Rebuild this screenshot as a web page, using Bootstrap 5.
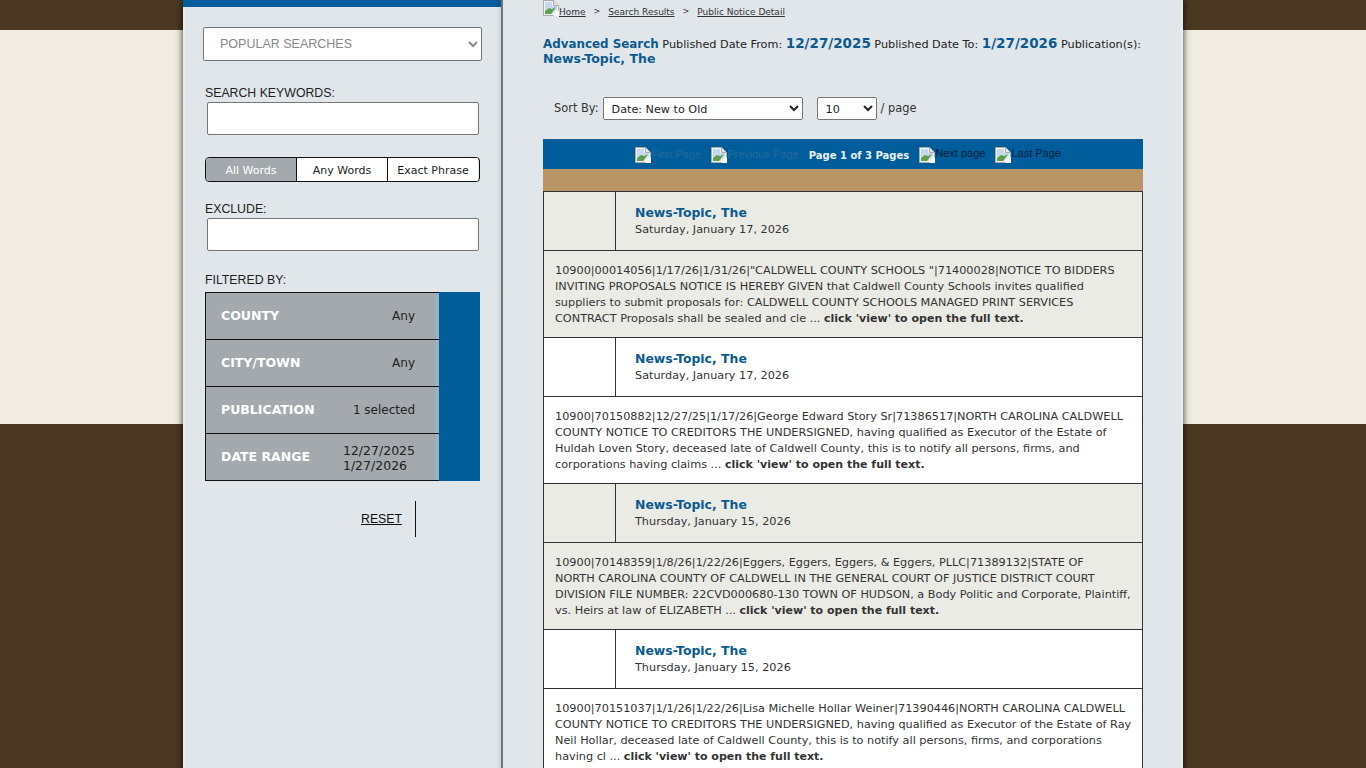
<!DOCTYPE html>
<html lang="en">
<head>
  <meta charset="UTF-8" />
  <meta name="viewport" content="width=device-width, initial-scale=1.0">
  <title>Public Notice Search</title>
  <link href="https://cdn.jsdelivr.net/npm/bootstrap@5.3.0/dist/css/bootstrap.min.css" rel="stylesheet">
  <style>
    :root {
      --brown: #4a3822;
      --cream: #f0ece1;
      --panel: #e1e6ea;
      --blue: #005d9c;
      --tan: #b99465;
      --filter-gray: #a3a9ac;
    }

    body {
      font-family: "DejaVu Sans", Verdana, sans-serif;
      color: #222;
      background: linear-gradient(var(--brown) 30px, var(--cream) 30px, var(--cream) 424px, var(--brown) 424px);
      background-repeat: no-repeat;
      background-color: var(--brown);
    }

    .page-wrap {
      width: 1000px;
      background: var(--panel);
      box-shadow: 0 0 7px rgba(0, 0, 0, 0.8), inset 2px 0 0 #e9ecef, inset -2px 0 0 #e9ecef;
    }

    /* native arrows, as in the original page */
    .form-select {
      appearance: auto;
      background-image: none;
    }

    /* Left column */
    .side-col {
      width: 318px;
      flex: none;
      border-top: 7px solid var(--blue);
      padding: 20px 20px 32px 20px;
    }

    .col-rule {
      width: 2px;
      flex: none;
      background: #6f7478;
      box-shadow: -2px 0 3px rgba(0, 0, 0, 0.12);
    }

    .popular-select {
      width: 279px;
      height: 34px;
      font-family: "Liberation Sans", Arial, sans-serif;
      font-size: 12.5px;
      color: #888;
      padding: 0 4px 0 12px;
      border: 1px solid #767676;
      border-radius: 2px;
    }

    .field-label {
      font-family: "Liberation Sans", Arial, sans-serif;
      font-size: 12.3px;
      line-height: 15px;
      margin: 0 0 1px 2px;
      color: #222;
    }

    .keywords-label {
      margin-top: 25px;
    }

    .filtered-label {
      margin-top: 22px;
      margin-bottom: 4px;
    }

    .text-field {
      display: block;
      width: 272px;
      height: 33px;
      margin-left: 4px;
      border: 1px solid #767676;
      border-radius: 2px;
    }

    .word-group {
      width: 275px;
      height: 25px;
      margin: 22px 0 20px 2px;
      display: flex;
      border: 1px solid #111;
      border-radius: 4px;
      overflow: hidden;
    }

    .word-group span {
      width: 91px;
      font-size: 11px;
      line-height: 25px;
      text-align: center;
      background: #fff;
      color: #222;
      border-left: 1px solid #111;
      white-space: nowrap;
    }

    .word-group span:first-child {
      width: 90px;
      background: var(--filter-gray);
      color: #fff;
      border-left: 0;
    }

    .filter-box {
      width: 275px;
      margin-left: 2px;
      background: var(--blue);
    }

    .filter-rows {
      width: 234px;
      border: 1px solid #111;
      border-right: 0;
      background: var(--filter-gray);
      box-shadow: inset -3px 0 0 #93b3c9;
    }

    .filter-line {
      height: 47px;
      display: flex;
      align-items: center;
      justify-content: space-between;
      padding: 0 24px 0 15px;
      border-top: 1px solid #111;
      font-size: 12px;
      line-height: 15px;
      color: #222;
    }

    .filter-rows .filter-line:first-child {
      height: 46px;
      border-top: 0;
    }

    .filter-line b {
      margin-top: -2px;
      font-size: 12.5px;
      color: #fff;
    }

    .filter-dates {
      margin-top: 2px;
      font-size: 12.5px;
    }

    .reset-row {
      width: 275px;
      margin: 20px 0 0 2px;
      padding-right: 64px;
    }

    .reset-row a {
      font-family: "Liberation Sans", Arial, sans-serif;
      font-size: 12.3px;
      color: #111;
      padding-right: 13px;
      height: 36px;
      line-height: 36px;
      border-right: 1px solid #111;
      display: block;
    }

    /* Right column */
    .main-col {
      width: 680px;
      padding: 0 40px;
    }

    .crumbs {
      height: 20px;
      padding-bottom: 2px;
      font-size: 9px;
      line-height: 12px;
      color: #333;
      gap: 8px;
    }

    .crumbs a {
      color: #333;
    }

    .crumbs span {
      font-size: 8px;
    }

    .broken-pic {
      width: 16px;
      height: 16px;
      flex: none;
    }

    .crumbs .broken-pic {
      margin-right: -8px;
      align-self: flex-start;
    }

    .search-summary {
      margin-top: 17px;
      font-size: 11.25px;
      line-height: 15px;
      color: #222;
    }

    .search-summary b {
      line-height: 1;
      color: #0c5a8f;
    }

    .sum-title {
      font-size: 11.9px;
    }

    .sum-paper {
      font-size: 12.5px;
    }

    .sum-date {
      font-size: 13.5px;
    }

    .sort-row {
      margin: 30px 0 19px 11px;
      font-size: 11.4px;
      height: 23px;
      color: #333;
    }

    .sort-row > span {
      padding-top: 1px;
    }

    .sort-row select {
      height: 23px;
      padding: 1px 2px 0 4px;
      font-size: 11.2px;
      font-family: "DejaVu Sans", Verdana, sans-serif;
      color: #222;
      border: 1px solid #767676;
      border-radius: 2px;
    }

    .sort-row .sort-by {
      width: 200px;
      margin-left: 4px;
    }

    .sort-row .per-page {
      width: 60px;
      margin-left: 14px;
      margin-right: 4px;
    }

    .pager-bar {
      height: 30px;
      padding-left: 10px;
      background: var(--blue);
      gap: 10px;
      font-size: 10px;
    }

    .pager-bar b {
      color: #e8f1f7;
      font-weight: 600;
      margin-top: 2px;
    }

    .pager-link {
      display: flex;
      align-items: flex-start;
      margin-top: 1px;
      font-family: "Liberation Sans", Arial, sans-serif;
      font-size: 11px;
      line-height: 13px;
      white-space: nowrap;
    }

    .pager-link.is-off {
      color: #23699a;
      line-height: 15px;
    }

    .pager-link.is-on {
      color: #04203a;
    }

    .tan-bar {
      height: 22px;
      background: var(--tan);
    }

    .notice-list {
      border-left: 1px solid #333;
      border-right: 1px solid #333;
      border-bottom: 1px solid #333;
    }

    .notice-head {
      height: 60px;
      border-top: 1px solid #333;
      border-bottom: 1px solid #333;
    }

    .notice-thumb {
      width: 72px;
      flex: none;
      border-right: 1px solid #333;
    }

    .notice-title {
      padding: 12px 0 0 19px;
      font-size: 11.25px;
      line-height: 17px;
      color: #333;
    }

    .notice-title b {
      display: block;
      font-size: 12.45px;
      color: #0c5a8f;
    }

    /* lines break where the original's do */
    .notice-body {
      height: 86px;
      padding: 12px 11px 0 11px;
      font-size: 11.25px;
      line-height: 16px;
      color: #333;
      white-space: nowrap;
    }

    .notice-body b {
      font-size: 11px;
    }

    .shade-a {
      background: #ebebe6;
    }

    .shade-b {
      background: #fff;
    }
  </style>
</head>
<body>
  <svg width="0" height="0" class="d-block">
    <symbol id="broken" viewBox="0 0 16 16">
      <path d="M.5.5h10l5 5v10H.5z" fill="#f4f4f4" stroke="#aaa"/>
      <path d="M10.5.5v5h5" fill="#e4e4e4" stroke="#aaa"/>
      <path d="M2 2h7v4h5v3l-5 5H2z" fill="#c6d9ec"/>
      <path d="M2 14v-3l4-3 3 1 4-2-5 7z" fill="#5f9f4c"/>
      <path d="M10 16l6-6v6z" fill="#fff"/>
    </symbol>
  </svg>

  <div class="page-wrap mx-auto d-flex">
    <!-- Search filters -->
    <aside class="side-col">
      <select class="form-select popular-select">
        <option>POPULAR SEARCHES</option>
      </select>

      <p class="field-label keywords-label">SEARCH KEYWORDS:</p>
      <input type="text" class="text-field">

      <div class="word-group">
        <span>All Words</span>
        <span>Any Words</span>
        <span>Exact Phrase</span>
      </div>

      <p class="field-label">EXCLUDE:</p>
      <input type="text" class="text-field">

      <p class="field-label filtered-label">FILTERED BY:</p>
      <div class="filter-box">
        <div class="filter-rows">
          <div class="filter-line"><b>COUNTY</b><span>Any</span></div>
          <div class="filter-line"><b>CITY/TOWN</b><span>Any</span></div>
          <div class="filter-line"><b>PUBLICATION</b><span>1 selected</span></div>
          <div class="filter-line"><b>DATE RANGE</b><span class="filter-dates">12/27/2025<br>1/27/2026</span></div>
        </div>
      </div>

      <div class="reset-row text-end">
        <a href="#">RESET</a>
      </div>
    </aside>

    <div class="col-rule"></div>

    <!-- Results -->
    <main class="main-col">
      <div class="crumbs d-flex align-items-end">
        <svg class="broken-pic"><use href="#broken"/></svg>
        <a href="#">Home</a><span>&gt;</span>
        <a href="#">Search Results</a><span>&gt;</span>
        <a href="#">Public Notice Detail</a>
      </div>

      <div class="search-summary">
        <b class="sum-title">Advanced Search</b> Published Date From: <b class="sum-date">12/27/2025</b> Published Date To: <b class="sum-date">1/27/2026</b> Publication(s):
        <b class="sum-paper">News-Topic, The</b>
      </div>

      <div class="sort-row d-flex align-items-center">
        <span>Sort By:</span>
        <select class="form-select sort-by">
          <option>Date: New to Old</option>
        </select>
        <select class="form-select per-page">
          <option>10</option>
        </select>
        <span>/ page</span>
      </div>

      <div class="pager-bar d-flex align-items-center justify-content-center">
        <span class="pager-link is-off"><svg class="broken-pic"><use href="#broken"/></svg>First Page</span>
        <span class="pager-link is-off"><svg class="broken-pic"><use href="#broken"/></svg>Previous Page</span>
        <b>Page 1 of 3 Pages</b>
        <span class="pager-link is-on"><svg class="broken-pic"><use href="#broken"/></svg>Next page</span>
        <span class="pager-link is-on"><svg class="broken-pic"><use href="#broken"/></svg>Last Page</span>
      </div>
      <div class="tan-bar"></div>

      <div class="notice-list">
        <div class="notice-head d-flex shade-a">
          <div class="notice-thumb"></div>
          <div class="notice-title"><b>News-Topic, The</b>Saturday, January 17, 2026</div>
        </div>
        <div class="notice-body shade-a">10900|00014056|1/17/26|1/31/26|"CALDWELL COUNTY SCHOOLS "|71400028|NOTICE TO BIDDERS<br>INVITING PROPOSALS NOTICE IS HEREBY GIVEN that Caldwell County Schools invites qualified<br>suppliers to submit proposals for: CALDWELL COUNTY SCHOOLS MANAGED PRINT SERVICES<br>CONTRACT Proposals shall be sealed and cle ... <b>click 'view' to open the full text.</b></div>

        <div class="notice-head d-flex shade-b">
          <div class="notice-thumb"></div>
          <div class="notice-title"><b>News-Topic, The</b>Saturday, January 17, 2026</div>
        </div>
        <div class="notice-body shade-b">10900|70150882|12/27/25|1/17/26|George Edward Story Sr|71386517|NORTH CAROLINA CALDWELL<br>COUNTY NOTICE TO CREDITORS THE UNDERSIGNED, having qualified as Executor of the Estate of<br>Huldah Loven Story, deceased late of Caldwell County, this is to notify all persons, firms, and<br>corporations having claims ... <b>click 'view' to open the full text.</b></div>

        <div class="notice-head d-flex shade-a">
          <div class="notice-thumb"></div>
          <div class="notice-title"><b>News-Topic, The</b>Thursday, January 15, 2026</div>
        </div>
        <div class="notice-body shade-a">10900|70148359|1/8/26|1/22/26|Eggers, Eggers, Eggers, &amp; Eggers, PLLC|71389132|STATE OF<br>NORTH CAROLINA COUNTY OF CALDWELL IN THE GENERAL COURT OF JUSTICE DISTRICT COURT<br>DIVISION FILE NUMBER: 22CVD000680-130 TOWN OF HUDSON, a Body Politic and Corporate, Plaintiff,<br>vs. Heirs at law of ELIZABETH ... <b>click 'view' to open the full text.</b></div>

        <div class="notice-head d-flex shade-b">
          <div class="notice-thumb"></div>
          <div class="notice-title"><b>News-Topic, The</b>Thursday, January 15, 2026</div>
        </div>
        <div class="notice-body shade-b">10900|70151037|1/1/26|1/22/26|Lisa Michelle Hollar Weiner|71390446|NORTH CAROLINA CALDWELL<br>COUNTY NOTICE TO CREDITORS THE UNDERSIGNED, having qualified as Executor of the Estate of Ray<br>Neil Hollar, deceased late of Caldwell County, this is to notify all persons, firms, and corporations<br>having cl ... <b>click 'view' to open the full text.</b></div>
      </div>
    </main>
  </div>

  <script src="https://cdn.jsdelivr.net/npm/bootstrap@5.3.0/dist/js/bootstrap.bundle.min.js"></script>
</body>
</html>
